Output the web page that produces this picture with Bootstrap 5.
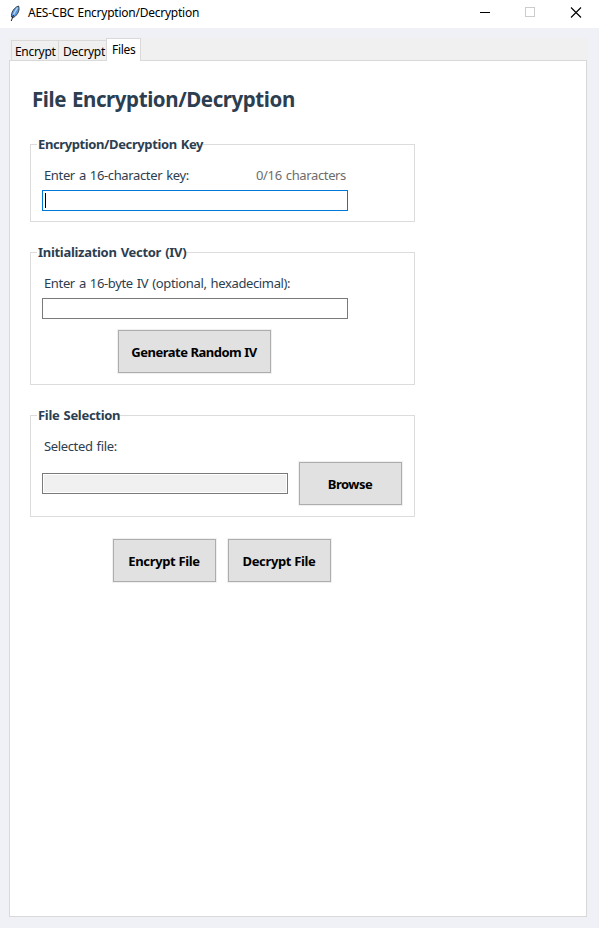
<!DOCTYPE html>
<html lang="en">
<head>
<meta charset="utf-8">
<meta name="viewport" content="width=device-width, initial-scale=1">
<title>AES-CBC Encryption/Decryption</title>
<link href="https://cdn.jsdelivr.net/npm/bootstrap@5.3.0/dist/css/bootstrap.min.css" rel="stylesheet">
<style>
body{font-family:"Noto Sans","Open Sans",sans-serif;font-size:13px;line-height:18px;letter-spacing:-.36px;word-spacing:1px;color:#2c3e50;background:#f0f1f6;height:928px;overflow:hidden;white-space:nowrap}
.titlebar{height:28px;color:#000;font-size:12px;letter-spacing:-.24px;word-spacing:.5px;padding-left:9px}
.titlebar .caption{margin:-2px auto 0 7px}
.window-icon{margin-top:-3px}
.caption-btn{width:45px;height:28px;margin-top:-3px;position:relative;left:-1px}
.notebook{margin:10px 11px 0 9px;height:879px;background:#f0f0f0}
.tabs{height:23px;padding-left:2px}
.tab{border:1px solid #d9d9d9;color:#000;font-size:12px;line-height:18px;letter-spacing:-.3px;background:#f0f0f0;height:21px;border-radius:0;padding:2px 0 0 4px;width:49px;margin-left:-1px;flex:none}
.tab:first-child{width:48px;margin-left:0;padding-left:3px}
.tab-on{background:#fff;height:23px;width:35px;border-bottom:0;padding-left:5px;position:relative;z-index:1}
.pane{border:1px solid #d9d9d9;background:#fff;width:578px;height:857px;margin-top:-1px;padding:0 20px}
.heading{font-size:20.5px;line-height:30px;font-weight:700;letter-spacing:-.42px;margin:0 0 0 2px;padding-top:23px}
.group{width:385px;border:1px solid #dcdcdc;padding-left:11px;margin-top:30px}
.group-title{font-size:13px;font-weight:700;line-height:18px;letter-spacing:-.3px;margin:-10px 0 13px -5px;background:#fff;width:max-content;padding:0 0 0 1px}
.group-key{height:78px}
.group-key .group-title{letter-spacing:-.39px}
.group-iv{height:133px}
.group-file{height:102px}
.field-label{width:302px;margin-left:2px}
.count{color:#6d6d6d}
.entry{border:1px solid #7a7a7a;border-radius:0;width:306px;height:21px;padding:2px;background:#fff;margin-top:6px}
.entry-focus{border-color:#0078d7}
.caret{width:1px;height:15px;background:#000}
.entry-ro{width:246px;padding:1px;margin:0}
.entry-ro div{background:#f0f0f0;height:100%}
.tkbtn{border:1px solid #adadad;border-radius:0;background:#e1e1e1;color:#000;font-size:13px;font-weight:700;line-height:18px;letter-spacing:-.34px;width:103px;height:43px;padding:1px 1px 0 0;outline:1px solid #f0f0f0}
.btn-generate{width:153px;margin:11px 0 0 76px;letter-spacing:-.48px}
.btn-browse{letter-spacing:-.5px}
.file-row{gap:11px;margin-top:7px}
.actions{gap:12px;margin:22px 0 0 83px}
</style>
</head>
<body>
<header class="titlebar bg-white d-flex align-items-center">
<svg class="window-icon" width="12" height="18" viewBox="0 0 12 18"><path d="M2.500 13C2 8.500 5 3.500 9.500 2C11 5 9.500 10.500 4.500 13.500Z" fill="#5c98de" stroke="#36404a" stroke-width="1"/><path d="M4.500 10.500L8.500 3.500" stroke="#b9d8f8" stroke-width="1.300"/><path d="M2.200 17L4.500 11" stroke="#222" stroke-width="1"/></svg>
<span class="caption">AES-CBC Encryption/Decryption</span>
<svg class="caption-btn" viewBox="0 0 45 28"><path d="M17 13.500H27" stroke="#000"/></svg>
<svg class="caption-btn" viewBox="0 0 45 28"><rect x="17.500" y="8.500" width="9" height="9" fill="none" stroke="#ccc"/></svg>
<svg class="caption-btn" viewBox="0 0 45 28"><path d="M18 8.500L28 18.500M28 8.500L18 18.500" stroke="#000" stroke-width="1.100"/></svg>
</header>
<main class="notebook">
<div class="tabs d-flex align-items-end">
<div class="tab">Encrypt</div><div class="tab">Decrypt</div><div class="tab tab-on">Files</div>
</div>
<div class="pane">
<h1 class="heading">File Encryption/Decryption</h1>
<section class="group group-key">
<h2 class="group-title">Encryption/Decryption Key</h2>
<div class="field-label d-flex justify-content-between"><span>Enter a 16-character key:</span><span class="count">0/16 characters</span></div>
<div class="entry entry-focus"><div class="caret"></div></div>
</section>
<section class="group group-iv">
<h2 class="group-title">Initialization Vector (IV)</h2>
<div class="field-label">Enter a 16-byte IV (optional, hexadecimal):</div>
<div class="entry"></div>
<button class="btn tkbtn btn-generate d-block">Generate Random IV</button>
</section>
<section class="group group-file">
<h2 class="group-title">File Selection</h2>
<div class="field-label">Selected file:</div>
<div class="file-row d-flex align-items-center"><div class="entry entry-ro"><div></div></div><button class="btn tkbtn btn-browse">Browse</button></div>
</section>
<div class="actions d-flex"><button class="btn tkbtn">Encrypt File</button><button class="btn tkbtn">Decrypt File</button></div>
</div>
</main>
<script src="https://cdn.jsdelivr.net/npm/bootstrap@5.3.0/dist/js/bootstrap.bundle.min.js"></script>
</body>
</html>
